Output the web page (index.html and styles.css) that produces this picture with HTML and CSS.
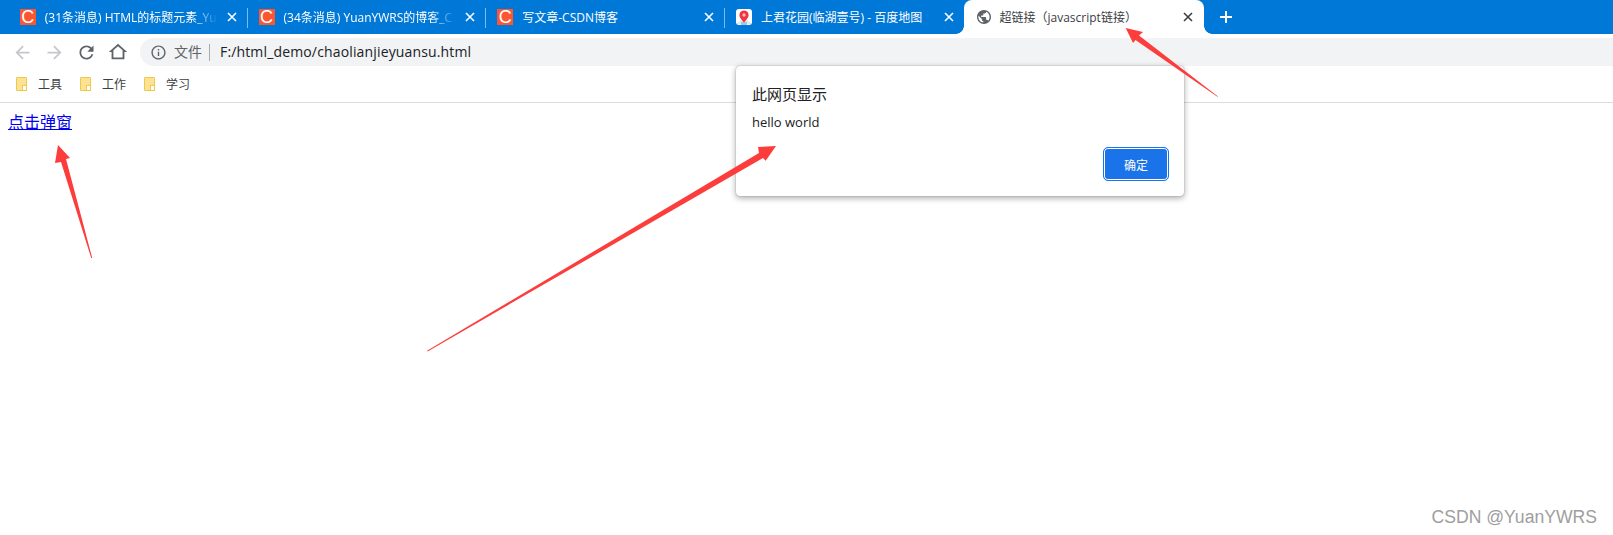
FILE: index.html
```html
<!DOCTYPE html>
<html lang="zh-CN">
<head>
<meta charset="utf-8">
<title>超链接（javascript链接）</title>
<link rel="stylesheet" href="styles.css">
</head>
<body>
<header class="chrome">
  <div class="tabstrip">
    <div class="tab">
      <span class="fav-c">C</span>
      <span class="tab-title tab-title--fade">(31条消息) HTML的标题元素_Yu</span>
      <svg class="tab-close" viewBox="0 0 10 10"><path d="M1 1l8 8M9 1l-8 8"/></svg>
    </div>
    <i class="tab-sep"></i>
    <div class="tab">
      <span class="fav-c">C</span>
      <span class="tab-title tab-title--fade">(34条消息) YuanYWRS的博客_C</span>
      <svg class="tab-close" viewBox="0 0 10 10"><path d="M1 1l8 8M9 1l-8 8"/></svg>
    </div>
    <i class="tab-sep"></i>
    <div class="tab">
      <span class="fav-c">C</span>
      <span class="tab-title">写文章-CSDN博客</span>
      <svg class="tab-close" viewBox="0 0 10 10"><path d="M1 1l8 8M9 1l-8 8"/></svg>
    </div>
    <i class="tab-sep"></i>
    <div class="tab tab--last">
      <svg class="fav-map" viewBox="0 0 16 16">
        <rect width="16" height="16" rx="3" fill="#fff"/>
        <path d="M1 14l4-3h6l4 3v1H1z" fill="#dbeedd"/>
        <path d="M5 13h6v3H5z" fill="#9cc6f0"/>
        <path d="M8 1.5a4.6 4.6 0 0 0-4.6 4.6C3.4 9.2 8 13.5 8 13.5s4.6-4.3 4.6-7.4A4.6 4.6 0 0 0 8 1.5z" fill="#ef3340"/>
        <circle cx="8" cy="6" r="1.7" fill="#f9b4b4"/>
      </svg>
      <span class="tab-title">上君花园(临湖壹号) - 百度地图</span>
      <svg class="tab-close" viewBox="0 0 10 10"><path d="M1 1l8 8M9 1l-8 8"/></svg>
    </div>
    <div class="tab tab--active">
      <svg class="fav-globe" viewBox="2 2 20 20"><path d="M12 2C6.48 2 2 6.48 2 12s4.48 10 10 10 10-4.48 10-10S17.52 2 12 2zm-1 17.93c-3.95-.49-7-3.85-7-7.93 0-.62.08-1.21.21-1.79L9 15v1c0 1.1.9 2 2 2v1.93zm6.9-2.54c-.26-.81-1-1.39-1.9-1.39h-1v-3c0-.55-.45-1-1-1H8v-2h2c.55 0 1-.45 1-1V7h2c1.1 0 2-.9 2-2v-.41c2.93 1.19 5 4.06 5 7.41 0 2.08-.8 3.97-2.1 5.39z"/></svg>
      <span class="tab-title">超链接（javascript链接）</span>
      <svg class="tab-close" viewBox="0 0 10 10"><path d="M1 1l8 8M9 1l-8 8"/></svg>
    </div>
    <svg class="new-tab" viewBox="0 0 14 14"><path d="M7 1v12M1 7h12"/></svg>
  </div>

  <div class="toolbar">
    <span class="nav-btn nav-btn--off"><svg class="nav-icon" viewBox="0 0 24 24"><path d="M20 11H7.83l5.59-5.59L12 4l-8 8 8 8 1.41-1.41L7.83 13H20v-2z"/></svg></span>
    <span class="nav-btn nav-btn--off"><svg class="nav-icon" viewBox="0 0 24 24"><path d="M4 11h12.17l-5.59-5.59L12 4l8 8-8 8-1.41-1.41L16.17 13H4v-2z"/></svg></span>
    <span class="nav-btn"><svg class="nav-icon" viewBox="0 0 24 24"><path d="M17.65 6.35C16.2 4.9 14.21 4 12 4c-4.42 0-7.99 3.58-7.99 8s3.57 8 7.99 8c3.73 0 6.84-2.55 7.73-6h-2.08c-.82 2.33-3.04 4-5.65 4-3.31 0-6-2.69-6-6s2.69-6 6-6c1.66 0 3.14.69 4.22 1.78L13 11h7V4l-2.35 2.35z"/></svg></span>
    <span class="nav-btn"><svg class="nav-icon nav-icon--home" viewBox="0 0 24 24"><path d="M12 3L2 12h3v8h14v-8h3L12 3zm5 15H7v-7.8l5-4.5 5 4.5V18z"/></svg></span>
    <div class="omnibox">
      <svg class="info-icon" viewBox="0 0 24 24"><path d="M11 7h2v2h-2zm0 4h2v6h-2zm1-9C6.48 2 2 6.48 2 12s4.48 10 10 10 10-4.48 10-10S17.52 2 12 2zm0 18c-4.41 0-8-3.59-8-8s3.59-8 8-8 8 3.59 8 8-3.59 8-8 8z"/></svg>
      <span class="scheme">文件</span>
      <i class="omni-sep"></i>
      <span class="url">F:/html_demo/chaolianjieyuansu.html</span>
    </div>
  </div>

  <nav class="bookmarks">
    <span class="bookmark"><i class="folder"></i>工具</span>
    <span class="bookmark"><i class="folder"></i>工作</span>
    <span class="bookmark"><i class="folder"></i>学习</span>
  </nav>
</header>

<main class="page">
  <a class="popup-link" href="#">点击弹窗</a>
</main>

<div class="dialog">
  <div class="dialog-title">此网页显示</div>
  <div class="dialog-msg">hello world</div>
  <div class="dialog-actions"><button class="dialog-ok">确定</button></div>
</div>

<svg class="annotations" viewBox="0 0 1613 535">
  <polygon points="92.2,258 66,159 70,158 58,145 55,163 61,162 91.2,258"/>
  <polygon points="427.6,351.5 763,158 765.7,160.7 776,146 758,147 759,153 427,350.7"/>
  <polygon points="1218,96.5 1139,35.5 1143,32 1125.7,28 1133,43 1135.5,40 1217.4,96.8"/>
</svg>

<div class="watermark">CSDN @YuanYWRS</div>
</body>
</html>
```

FILE: styles.css
```css
* { box-sizing: border-box; }

html, body { height: 100%; }

body {
  margin: 0;
  background: #fff;
  overflow: hidden;
  font-family: "Open Sans", "Noto Sans CJK SC", sans-serif;
}

.tabstrip {
  display: flex;
  align-items: stretch;
  height: 34px;
  padding-left: 8.75px;
  background: #0078d7;
}

.tab {
  position: relative;
  display: flex;
  align-items: center;
  flex: 0 0 237.75px;
  min-width: 0;
  padding: 0 10px 0 11px;
  color: #fff;
  font-size: 12px;
}

.tab--last { flex-basis: 238.5px; }

.tab-sep {
  flex: 0 0 1px;
  height: 20px;
  margin-top: 8px;
  background: rgba(255, 255, 255, .5);
}

.fav-c {
  flex: 0 0 16px;
  height: 16px;
  background: #fc5531;
  color: #fff;
  font: 18px/16px "Liberation Sans", sans-serif;
  text-align: center;
}

.fav-map {
  flex: 0 0 16px;
  width: 16px;
  height: 16px;
}

.fav-globe {
  flex: 0 0 14px;
  width: 14px;
  height: 14px;
  fill: #5f6368;
}

.tab-title {
  flex: 1;
  min-width: 0;
  margin-left: 9px;
  white-space: nowrap;
}

.tab-title--fade {
  -webkit-mask-image: linear-gradient(to right, #000 85%, transparent 100%);
  mask-image: linear-gradient(to right, #000 85%, transparent 100%);
}

.tab-close {
  flex: 0 0 10px;
  width: 10px;
  height: 10px;
  margin-left: 9px;
  stroke: #fff;
  stroke-width: 1.6;
  fill: none;
}

.tab--active {
  flex: 0 0 240px;
  padding-left: 13px;
  padding-right: 11px;
  background: #fff;
  color: #3c4043;
  border-radius: 8px 8px 0 0;
}

.tab--active .tab-close { stroke: #3c4043; }

.tab--active::before,
.tab--active::after {
  content: "";
  position: absolute;
  bottom: 0;
  width: 8px;
  height: 8px;
}

.tab--active::before {
  right: 100%;
  background: radial-gradient(circle at 0 0, transparent 7.5px, #fff 8px);
}

.tab--active::after {
  left: 100%;
  background: radial-gradient(circle at 100% 0, transparent 7.5px, #fff 8px);
}

.new-tab {
  align-self: center;
  flex: 0 0 14px;
  width: 14px;
  height: 14px;
  margin-left: 15px;
  stroke: #fff;
  stroke-width: 2;
  fill: none;
}

.toolbar {
  display: flex;
  align-items: stretch;
  height: 32px;
  padding: 4px 0 0 6px;
  background: #fff;
}

.nav-btn {
  display: flex;
  align-items: center;
  justify-content: center;
  flex: 0 0 32px;
  fill: #5f6368;
}

.nav-btn--off { fill: #c4c7cb; }

.nav-icon {
  width: 21px;
  height: 21px;
}

.nav-icon--home {
  width: 22px;
  height: 22px;
}

.omnibox {
  display: flex;
  align-items: center;
  flex: 1;
  margin-left: 6px;
  padding-left: 10px;
  background: #f1f3f4;
  border-radius: 14px 0 0 14px;
}

.info-icon {
  width: 17px;
  height: 17px;
  fill: #5f6368;
}

.scheme {
  margin: 0 0 2px 7px;
  font-size: 14px;
  color: #5f6368;
}

.omni-sep {
  width: 1px;
  height: 17px;
  margin-left: 7px;
  background: #a8acb0;
}

.url {
  margin: 0 0 2px 10px;
  font-size: 14px;
  letter-spacing: .15px;
  color: #202124;
}

.bookmarks {
  display: flex;
  align-items: center;
  gap: 18px;
  height: 37px;
  padding-left: 16px;
  border-bottom: 1px solid #dadce0;
  background: #fff;
}

.bookmark {
  display: flex;
  align-items: center;
  gap: 11px;
  font-size: 12px;
  color: #3c4043;
}

.folder {
  position: relative;
  width: 11px;
  height: 14px;
  background: #fde293;
  border: 1px solid #f0c948;
  border-radius: 1px;
}

.folder::after {
  content: "";
  position: absolute;
  right: -1px;
  bottom: -1px;
  width: 3px;
  height: 4px;
  background: #fff;
  border: 1px solid #f0c948;
}

.page {
  padding: 8px;
  line-height: 20px;
}

.popup-link {
  font-size: 16px;
  font-family: "Noto Sans CJK SC", sans-serif;
  color: #00e;
}

.dialog {
  position: absolute;
  left: 736px;
  top: 66px;
  width: 448px;
  height: 130px;
  padding: 16px 16px 15px;
  background: #fff;
  border-radius: 4px;
  box-shadow: 0 0 1px rgba(0, 0, 0, .5), 0 2px 6px rgba(0, 0, 0, .35);
  display: flex;
  flex-direction: column;
}

.dialog-title {
  font-size: 15px;
  line-height: 24px;
  color: #202124;
}

.dialog-msg {
  margin-top: 6px;
  font-size: 13px;
  line-height: 20px;
  color: #202124;
}

.dialog-actions {
  display: flex;
  justify-content: flex-end;
  margin-top: auto;
}

.dialog-ok {
  width: 66px;
  height: 34px;
  margin-right: -1px;
  padding: 0;
  background: #1a73e8;
  color: #fff;
  font: 12px "Noto Sans CJK SC", sans-serif;
  border: 1px solid #1a73e8;
  border-radius: 5px;
  box-shadow: inset 0 0 0 1px #fff;
  outline: none;
}

.annotations {
  position: absolute;
  left: 0;
  top: 0;
  width: 1613px;
  height: 535px;
  fill: #fd3c3c;
  pointer-events: none;
}

.watermark {
  position: absolute;
  right: 16px;
  bottom: 7px;
  font: 17.6px "Liberation Sans", sans-serif;
  color: #9e9e9e;
}
```
